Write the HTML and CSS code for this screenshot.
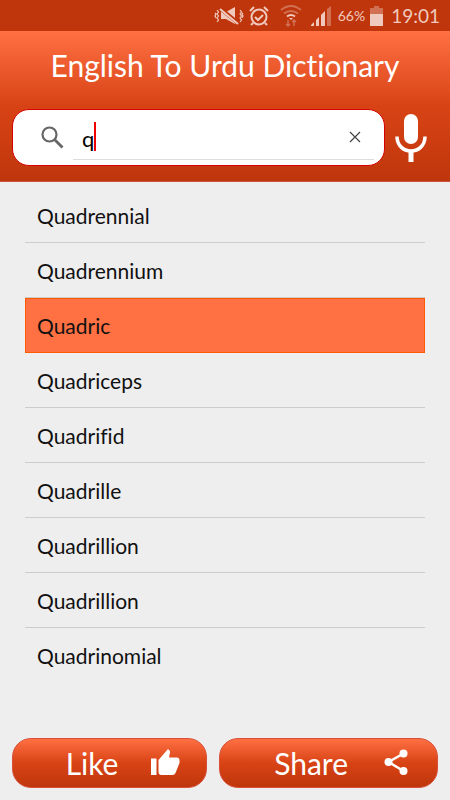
FILE: index.html
```html
<!DOCTYPE html>
<html lang="en">
<head>
<meta charset="utf-8">
<meta name="viewport" content="width=device-width, initial-scale=1">
<title>English To Urdu Dictionary</title>
<link rel="stylesheet" href="styles.css">
</head>
<body>
<div class="status">
  <svg width="30" height="20" viewBox="0 0 30 20" fill="none" stroke="currentColor" stroke-width="1.200" aria-hidden="true">
    <path d="M3 4l1.500 2L3 8l1.500 2L3 12l1.500 2L3 16M1 7l1 1-1 2 1 2M26 4l1.500 2L26 8l1.500 2-1.500 2 1.500 2-1.500 2M29 7l-1 1 1 2-1 2"/>
    <path d="M7 6h5l9-5v17l-9-5H7z" fill="currentColor" stroke="none"/>
    <path d="M7 3l17 14" stroke="#bf360c" stroke-width="4"/>
    <path d="M6 3l18 15" stroke-width="2"/>
  </svg>
  <svg width="20" height="20" viewBox="0 0 20 20" fill="none" stroke="currentColor" stroke-width="2" aria-hidden="true">
    <circle cx="10" cy="11" r="7.5"/>
    <path d="M6 11l3 3 5-5M1 5l4-4M19 5l-4-4M4 17l-2 2M16 17l2 2"/>
  </svg>
  <svg class="wifi" width="22" height="24" viewBox="0 0 22 24" fill="none" stroke="currentColor" stroke-width="2" aria-hidden="true">
    <path d="M1 6q10-8 20 0M4 9.500q7-5 14 0" opacity=".4"/>
    <path d="M7 12.500q4-3 8 0"/>
    <path d="M9 14h4l-2 2z" fill="currentColor" stroke="none"/>
    <path d="M8 16v6M6 20l2 2 2-2M14 22v-6M12 18l2-2 2 2" stroke-width="1.500" opacity=".4"/>
  </svg>
  <svg class="signal" width="20" height="20" viewBox="0 0 20 20" fill="currentColor" aria-hidden="true">
    <path d="M0 20v-1l3-3v4zM5 20v-6l3-3v9zM10 20V9l4-4v15z"/>
    <path d="M16 20V3l4-3v20z" opacity=".4"/>
  </svg>
  <span class="percent">66%</span>
  <svg class="battery" width="13" height="20" viewBox="0 0 13 20" fill="currentColor" aria-hidden="true">
    <path d="M4 0h5v2h4v6H0V2h4z" opacity=".4"/>
    <path d="M0 8h13v12H0z"/>
  </svg>
  <time class="clock">19:01</time>
</div>
<header class="header">
  <h1 class="title">English To Urdu Dictionary</h1>
  <form class="search">
    <div class="box">
      <svg class="lens" width="24" height="24" viewBox="0 0 24 24" fill="none" stroke="#666" aria-hidden="true">
        <circle cx="8.500" cy="8.500" r="7" stroke-width="2.200"/>
        <path d="M13.500 13.500l8 8" stroke-width="2.800"/>
      </svg>
      <div class="field">
        <input class="query" type="text" value="q" aria-label="Search word">
        <span class="caret"></span>
        <button class="clear" type="button" aria-label="Clear">
          <svg width="12" height="12" viewBox="0 0 12 12" fill="none" stroke="#444" stroke-width="1.200" aria-hidden="true"><path d="M1 1l10 10M11 1L1 11"/></svg>
        </button>
      </div>
    </div>
    <button class="mic" type="button" aria-label="Voice search">
      <svg width="32" height="48" viewBox="0 0 32 48" aria-hidden="true">
        <rect x="9" y="0" width="14" height="30" rx="7" fill="#fff"/>
        <path d="M2 22.500c0 9 6.500 14.500 14 14.500s14-5.500 14-14.500" fill="none" stroke="#fff" stroke-width="3.500"/>
        <path d="M16 37v11" stroke="#fff" stroke-width="5"/>
      </svg>
    </button>
  </form>
</header>
<main class="main">
  <ul class="words">
    <li class="word">Quadrennial</li>
    <li class="word">Quadrennium</li>
    <li class="word selected">Quadric</li>
    <li class="word">Quadriceps</li>
    <li class="word">Quadrifid</li>
    <li class="word">Quadrille</li>
    <li class="word">Quadrillion</li>
    <li class="word">Quadrillion</li>
    <li class="word">Quadrinomial</li>
  </ul>
</main>
<footer class="actions">
  <button class="action like" type="button">Like
    <svg width="30" height="28" viewBox="0 0 30 28" fill="#fff" aria-hidden="true">
      <path d="M1 9.500h5.500V26H1zM8.500 11L18 0l1.500 1.500q.8.800.5 2L19 8.500h8q2.500 0 2.500 3V14l-4 10q-.8 2-3 2H11.500q-3 0-3-3z"/>
    </svg>
  </button>
  <button class="action share" type="button">Share
    <svg width="24" height="28" viewBox="0 0 24 28" fill="#fff" aria-hidden="true">
      <path d="M19.500 4.500L4.500 13l15 9" fill="none" stroke="#fff" stroke-width="2.500"/>
      <circle cx="19.500" cy="4.500" r="4"/><circle cx="4.500" cy="13" r="4"/><circle cx="19.500" cy="22" r="4"/>
    </svg>
  </button>
</footer>
</body>
</html>
```
FILE: styles.css
```css
* { box-sizing: border-box; }

body {
  margin: 0;
  min-height: 100vh;
  display: flex;
  flex-direction: column;
  background: #eee;
  color: #111;
  font-family: Lato, "Noto Sans", sans-serif;
  font-variant-ligatures: none;
}

button {
  border: 0;
  padding: 0;
  background: none;
  font: inherit;
  color: inherit;
}

svg { display: block; flex: none; }

.status {
  height: 31px;
  display: flex;
  align-items: center;
  justify-content: flex-end;
  gap: 5px;
  padding-right: 10px;
  background: #bf360c;
  color: #efc9bd;
}

.wifi { margin-left: 6px; }
.signal { margin-left: 4px; }
.percent { font-size: 14px; margin-left: 2px; }
.clock { font-size: 19px; margin-left: 3px; }

.header {
  padding: 14px 23px 15px 12px;
  background: linear-gradient(#ff7043, #d84315 50%, #bf360c);
  border-bottom: 1px solid #c9543a;
}

.title {
  margin: 0 0 24px;
  padding-left: 11px;
  font-size: 30px;
  line-height: 40px;
  font-weight: 400;
  text-align: center;
  white-space: nowrap;
  color: #fff;
}

.search { display: flex; align-items: center; gap: 10px; }

.box {
  flex: 1;
  min-width: 0;
  height: 57px;
  display: flex;
  align-items: center;
  gap: 8px;
  padding: 0 10px 0 28px;
  background: #fff;
  border: 1px solid #d50000;
  border-radius: 17px;
}

.field {
  flex: 1;
  min-width: 0;
  align-self: stretch;
  position: relative;
  display: flex;
  align-items: center;
  margin-bottom: 5px;
  border-bottom: 1px solid #ddd;
}

.query {
  flex: 1;
  min-width: 0;
  border: 0;
  outline: 0;
  padding: 8px 0 0 9px;
  background: transparent;
  font: 22px Lato, "Noto Sans", sans-serif;
  color: #000;
}

.caret {
  position: absolute;
  left: 21px;
  top: 12px;
  width: 2px;
  height: 29px;
  background: #f00000;
}

.clear { margin: 4px 13px 0 0; }

.main { flex: 1; padding: 6px 25px 0; }

.words { margin: 0; padding: 0; list-style: none; }

.word {
  height: 55px;
  padding: 0 12px;
  border-bottom: 1px solid #ccc;
  font-size: 21px;
  line-height: 56px;
}

.word:last-child { border-bottom: 0; }

.selected {
  background: #ff7043;
  border: 1px solid #ff5a00;
  padding: 0 11px;
  line-height: 54px;
}

.actions {
  display: grid;
  grid-template-columns: 195fr 218fr;
  gap: 12px;
  padding: 0 12px 12px;
}

.action {
  height: 50px;
  display: flex;
  align-items: center;
  justify-content: flex-end;
  gap: 32px;
  padding-right: 26px;
  border: 1px solid #d9503a;
  border-radius: 19px;
  background: linear-gradient(#ff7043, #d84315 50%, #bf360c);
  font-size: 30px;
  line-height: 40px;
  color: #fff;
}

.share { gap: 36px; padding-right: 29px; }
```
